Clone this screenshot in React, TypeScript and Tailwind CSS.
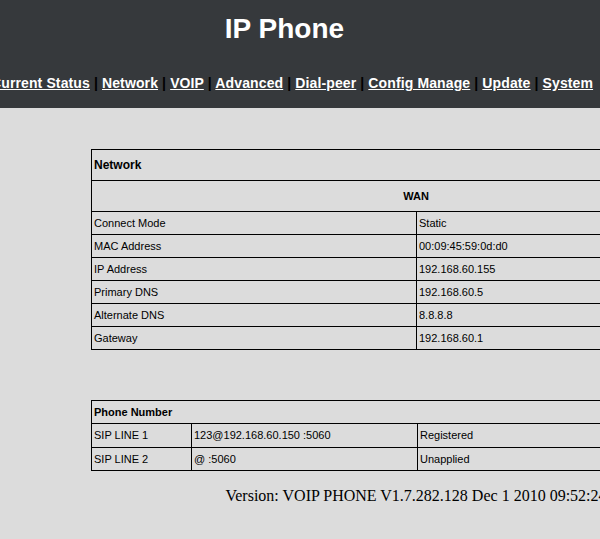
import React from "react";

const navLinks = ["Current Status", "Network", "VOIP", "Advanced", "Dial-peer", "Config Manage", "Update", "System"];

const wanRows = [
  ["Connect Mode", "Static"],
  ["MAC Address", "00:09:45:59:0d:d0"],
  ["IP Address", "192.168.60.155"],
  ["Primary DNS", "192.168.60.5"],
  ["Alternate DNS", "8.8.8.8"],
  ["Gateway", "192.168.60.1"],
];

const sipRows = [
  ["SIP LINE 1", "123@192.168.60.150 :5060", "Registered"],
  ["SIP LINE 2", "@ :5060", "Unapplied"],
];

const cell = "border border-black px-[2px] py-0 text-left align-middle";

const App: React.FC = () => {
  return (
    <div className="min-h-screen w-full overflow-hidden bg-[#dcdcdc] font-['Liberation_Sans',Arial,sans-serif]">
      {/* Header */}
      <div className="h-[108px] bg-[#36393c] pt-[13px]">
        <div className="w-[569px] text-center text-[28px] leading-[32px] font-bold text-white">IP Phone</div>
        <div className="mt-[30px] ml-[-9px] whitespace-nowrap text-[14px] leading-[16px] font-bold tracking-[0.12px] text-black">
          {navLinks.map((l, i) => (
            <React.Fragment key={l}>
              {i > 0 && " | "}
              <a href="#" className="text-white underline">{l}</a>
            </React.Fragment>
          ))}
        </div>
      </div>

      {/* Network table */}
      <table className="mt-[41px] ml-[91px] w-[650px] border border-black text-[11px] text-black">
        <tbody>
          <tr className="h-[31px]">
            <td colSpan={2} className={`${cell} text-[12px] font-bold`}>Network</td>
          </tr>
          <tr className="h-[31px]">
            <td colSpan={2} className={`${cell} font-bold`} style={{ textAlign: "center" }}>WAN</td>
          </tr>
          {wanRows.map(([k, v]) => (
            <tr key={k} className="h-[23px]">
              <td className={`${cell} w-[325px]`}>{k}</td>
              <td className={cell}>{v}</td>
            </tr>
          ))}
        </tbody>
      </table>

      {/* Phone number table */}
      <table className="mt-[50px] ml-[91px] w-[650px] border border-black text-[11px] text-black">
        <tbody>
          <tr className="h-[23px]">
            <td colSpan={3} className={`${cell} font-bold`}>Phone Number</td>
          </tr>
          {sipRows.map(([a, b, c], i) => (
            <tr key={a} className={i === 0 ? "h-[24px]" : "h-[23px]"}>
              <td className={`${cell} w-[100px]`}>{a}</td>
              <td className={`${cell} w-[226px]`}>{b}</td>
              <td className={cell}>{c}</td>
            </tr>
          ))}
        </tbody>
      </table>

      <div className="mt-[16px] ml-[91px] w-[650px] text-center font-['Liberation_Serif','Times_New_Roman',serif] text-[16px] leading-[18px] text-black">
        Version: VOIP PHONE V1.7.282.128 Dec 1 2010 09:52:24
      </div>
    </div>
  );
};

export default App;
